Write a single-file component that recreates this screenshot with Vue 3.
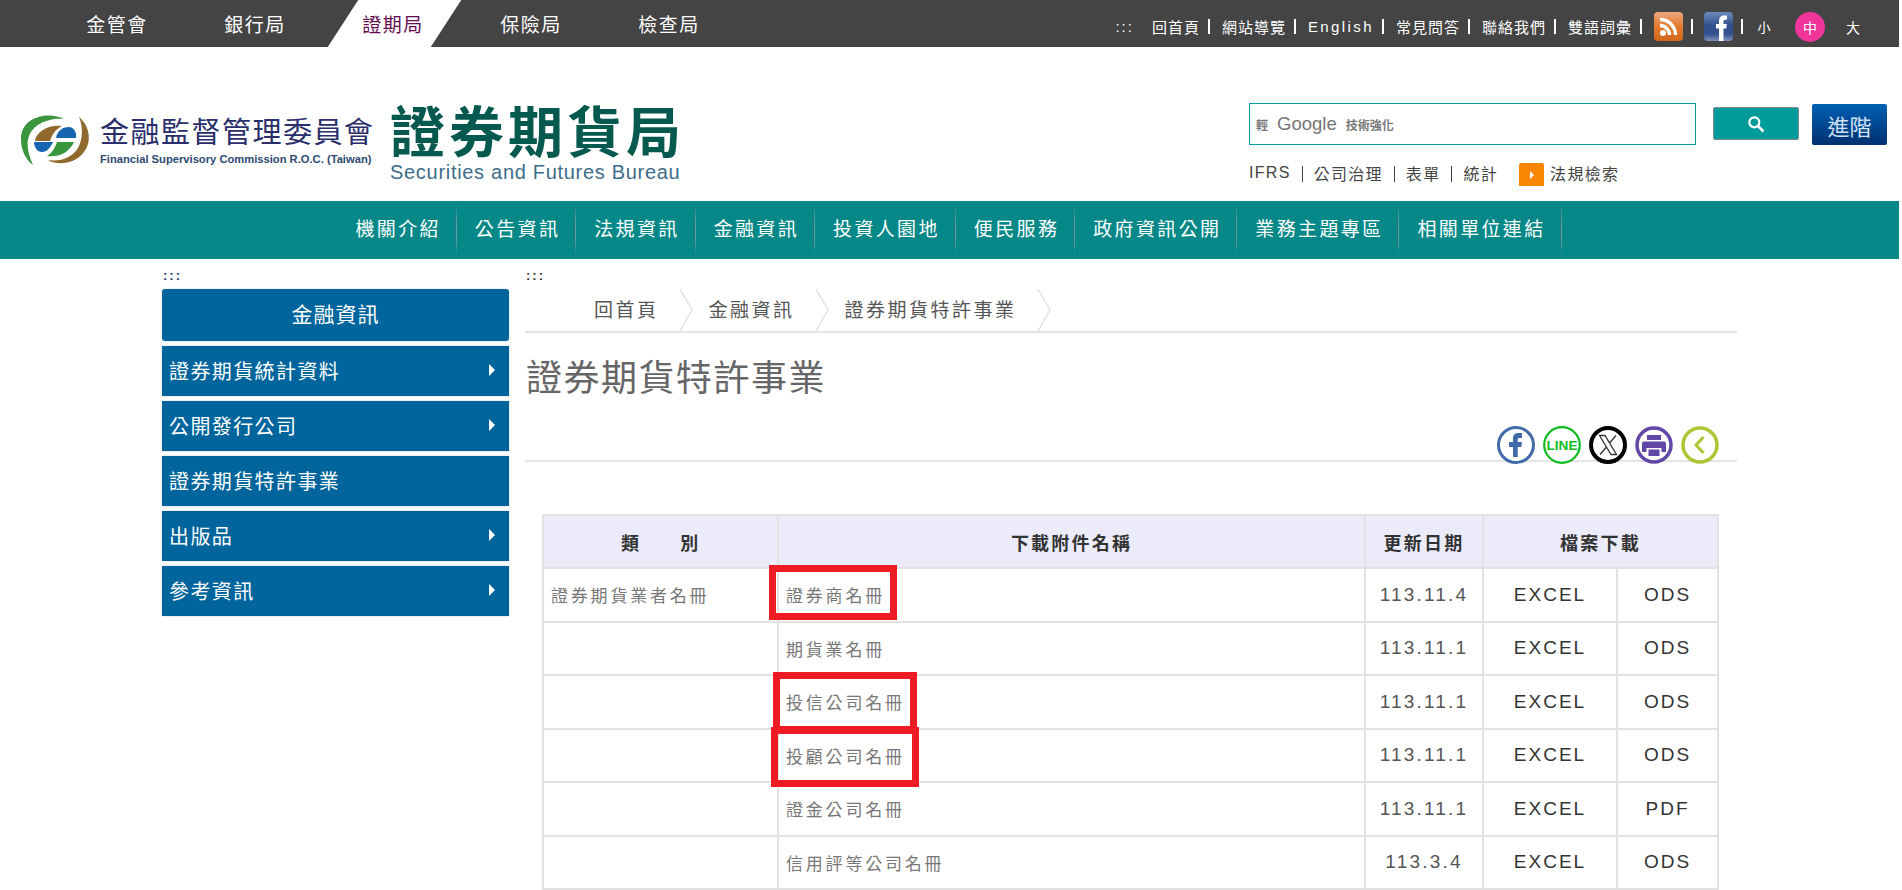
<script setup>
const tabs = ['金管會', '銀行局', '證期局', '保險局', '檢查局']
const utils = ['回首頁', '網站導覽', 'English', '常見問答', '聯絡我們', '雙語詞彙']
const subLinks = ['IFRS', '公司治理', '表單', '統計']
const navItems = ['機關介紹', '公告資訊', '法規資訊', '金融資訊', '投資人園地', '便民服務', '政府資訊公開', '業務主題專區', '相關單位連結']
const sideItems = [
  { name: '證券期貨統計資料', more: true },
  { name: '公開發行公司', more: true },
  { name: '證券期貨特許事業', more: false },
  { name: '出版品', more: true },
  { name: '參考資訊', more: true }
]
const crumbs = ['回首頁', '金融資訊', '證券期貨特許事業']
const rows = [
  { cat: '證券期貨業者名冊', name: '證券商名冊', date: '113.11.4', alt: 'ODS' },
  { cat: '', name: '期貨業名冊', date: '113.11.1', alt: 'ODS' },
  { cat: '', name: '投信公司名冊', date: '113.11.1', alt: 'ODS' },
  { cat: '', name: '投顧公司名冊', date: '113.11.1', alt: 'ODS' },
  { cat: '', name: '證金公司名冊', date: '113.11.1', alt: 'PDF' },
  { cat: '', name: '信用評等公司名冊', date: '113.3.4', alt: 'ODS' }
]
</script>

<template>
  <div class="page">
    <div class="topbar">
      <ul class="tabs">
        <li v-for="t in tabs" :key="t" class="tab" :class="{ active: t === '證期局' }"><span>{{ t }}</span></li>
      </ul>
      <div class="utils">
        <span class="dots">:::</span>
        <template v-for="u in utils" :key="u">
          <a class="util" :class="{ en: u === 'English' }">{{ u }}</a><i class="sep"></i>
        </template>
        <svg class="social" viewBox="0 0 29 29">
          <defs>
            <linearGradient id="rssg" x1="0" y1="0" x2="0" y2="1">
              <stop offset="0" stop-color="#efa77c" /><stop offset=".5" stop-color="#e27a2e" /><stop offset="1" stop-color="#d2671c" />
            </linearGradient>
          </defs>
          <rect width="29" height="29" rx="4" fill="url(#rssg)" />
          <circle cx="9" cy="21" r="3" fill="#fff" />
          <path d="M6 13.500a9.500 9.500 0 0 1 9.500 9.500M6 7.500a15.500 15.500 0 0 1 15.500 15.500" fill="none" stroke="#fff" stroke-width="3.400" />
        </svg>
        <i class="sep after-icon"></i>
        <svg class="social" viewBox="0 0 29 29">
          <defs>
            <linearGradient id="fbg" x1="0" y1="0" x2="0" y2="1">
              <stop offset="0" stop-color="#6d8abd" /><stop offset=".45" stop-color="#34518f" /><stop offset=".75" stop-color="#324f8e" /><stop offset="1" stop-color="#7f92ba" />
            </linearGradient>
          </defs>
          <rect width="29" height="29" rx="4" fill="url(#fbg)" />
          <path d="M15 29V16.500h-3v-4.500h3V9c0-3.500 2-5.500 5.500-5.500H23v4.300h-1.600c-1.400 0-1.900.7-1.900 1.900V12h3.300l-.5 4.500h-2.800V29z" fill="#fff" />
        </svg>
        <i class="sep last"></i>
        <a class="size small">小</a>
        <a class="size current">中</a>
        <a class="size big">大</a>
      </div>
    </div>

    <header class="head">
      <svg class="logo" viewBox="0 0 72 52">
        <path d="M44 5C30-3 0 2 1 26c0 10 5 20 12 25C8 40 6 30 9 22 13 10 30 3 44 5z" fill="#3a963c" />
        <path d="M59 3c11 9 13 25 5 35-9 12-26 14-36 8 12 2 24-2 30-12 5-9 5-22 1-31z" fill="#8f6a2c" />
        <path d="M15 27c1-9 13-17 27-15-6 3-10 8-12 15z" fill="#8f6a2c" />
        <path d="M36 24c1-8 8-11 13-11s8 6 7 11z" fill="#1565b0" />
        <path d="M14 28h19c-3 6-6 10-11 10s-8-5-8-10z" fill="#1565b0" />
        <path d="M37 28h17c-4 9-14 16-27 14 5-3 8-8 10-14z" fill="#3a963c" />
      </svg>
      <div class="org">
        <div class="org-cn">金融監督管理委員會</div>
        <div class="org-en">Financial Supervisory Commission R.O.C. (Taiwan)</div>
      </div>
      <div class="bureau">
        <div class="bureau-cn">證券期貨局</div>
        <div class="bureau-en">Securities and Futures Bureau</div>
      </div>
      <div class="head-right">
        <div class="search-row">
          <div class="search-box">
            <span class="g-small">輕</span><span class="g-logo">Google</span><span class="g-small">技術強化</span>
          </div>
          <button class="search-btn">
            <svg viewBox="0 0 24 24" width="20" height="20"><circle cx="10" cy="10" r="6" fill="none" stroke="#fff" stroke-width="2.600" /><path d="M14.500 14.500 21 21" stroke="#fff" stroke-width="3" /></svg>
          </button>
          <button class="adv-btn">進階</button>
        </div>
        <div class="sub-links">
          <template v-for="(s, i) in subLinks" :key="s">
            <i v-if="i" class="bar"></i><a>{{ s }}</a>
          </template>
          <span class="law-icon"><i></i></span>
          <a>法規檢索</a>
        </div>
      </div>
    </header>

    <nav class="mainnav">
      <a v-for="n in navItems" :key="n" class="nav-item">{{ n }}</a>
    </nav>

    <div class="content">
      <aside class="side">
        <div class="dots2">:::</div>
        <div class="side-title">金融資訊</div>
        <a v-for="s in sideItems" :key="s.name" class="side-item" :class="{ more: s.more }">{{ s.name }}</a>
      </aside>

      <main class="main">
        <div class="dots2">:::</div>
        <div class="crumbs">
          <a v-for="c in crumbs" :key="c" class="crumb">{{ c }}
            <svg class="chev" viewBox="0 0 14 42" preserveAspectRatio="none"><path d="M1 0 13 21 1 42" fill="none" stroke="#ddd" stroke-width="1.200" /></svg>
          </a>
        </div>
        <h1 class="title">證券期貨特許事業</h1>
        <div class="share">
          <svg viewBox="0 0 38 38"><circle cx="19" cy="19" r="17.500" fill="#fff" stroke="#416ba8" stroke-width="3" /><path d="M16 31V21h-4v-5h4v-3.500C16 8.500 18.200 7 21.500 7H25v5h-2.500c-1.300 0-1.800.6-1.800 1.700V16H25l-.7 5h-3.600v10z" fill="#416ba8" /></svg>
          <svg viewBox="0 0 38 38"><circle cx="19" cy="19" r="17.800" fill="#fff" stroke="#0fbc1f" stroke-width="2.200" /><text x="19" y="24" text-anchor="middle" textLength="31" lengthAdjust="spacingAndGlyphs" class="line-text">LINE</text></svg>
          <svg viewBox="0 0 38 38"><circle cx="19" cy="19" r="17" fill="#fff" stroke="#000" stroke-width="4" /><path d="M10.500 9.500h5.500l11.500 19H22zM27 9.500 20.500 17M17.500 21 11 28.500" fill="none" stroke="#333" stroke-width="1.300" /></svg>
          <svg viewBox="0 0 38 38"><circle cx="19" cy="19" r="17" fill="#fff" stroke="#6246a6" stroke-width="3.500" /><path d="M12 9h14v5H12zM9 15.500h20a2 2 0 0 1 2 2V26h-4.500v-4h-15v4H7v-8.500a2 2 0 0 1 2-2zM13.500 23.500h11V30h-11z" fill="#6246a6" /></svg>
          <svg viewBox="0 0 38 38"><circle cx="19" cy="19" r="17" fill="#fff" stroke="#b0c534" stroke-width="3.500" /><path d="M22.500 11 15 19l7.500 8" fill="none" stroke="#b0c534" stroke-width="3" /></svg>
        </div>

        <div class="table-wrap">
          <table class="files">
            <colgroup>
              <col class="c1" /><col class="c2" /><col class="c3" /><col class="c4" /><col class="c5" />
            </colgroup>
            <thead>
              <tr>
                <th class="cat-head">類　　別</th>
                <th>下載附件名稱</th>
                <th>更新日期</th>
                <th colspan="2">檔案下載</th>
              </tr>
            </thead>
            <tbody>
              <tr v-for="r in rows" :key="r.name">
                <td class="txt">{{ r.cat }}</td>
                <td class="txt">{{ r.name }}</td>
                <td class="date">{{ r.date }}</td>
                <td class="dl">EXCEL</td>
                <td class="dl">{{ r.alt }}</td>
              </tr>
            </tbody>
          </table>
          <!-- red marks drawn over the screenshot -->
          <i class="mark m1"></i>
          <i class="mark m2"></i>
          <i class="mark m3"></i>
        </div>
      </main>
    </div>
  </div>
</template>

<style>
html, body { margin: 0; background: #fff; overflow: hidden; }
</style>

<style scoped>
.page {
  width: 1899px; height: 890px; overflow: hidden;
  font-family: "Liberation Sans", "Noto Sans CJK TC", sans-serif;
  color: #555;
}
ul { list-style: none; margin: 0; padding: 0; }
.topbar { height: 47px; background: #444; display: flex; justify-content: space-between; color: #fff; }
.tabs { display: flex; padding-left: 48px; }
.tab { width: 138px; height: 47px; display: flex; align-items: center; justify-content: center; position: relative; font-size: 19px; letter-spacing: 1.500px; }
.tab span { position: relative; }
.tab.active { color: #660c50; }
.tab.active::before { content: ""; position: absolute; left: 19px; top: 0; width: 103px; height: 47px; background: #fff; transform: skewX(-33deg); }

.utils { display: flex; align-items: center; padding-right: 31px; font-size: 15px; letter-spacing: 1px; margin-top: 6px; height: 41px; }
.dots { margin-right: 18px; letter-spacing: 2px; }
.util { white-space: nowrap; }
.util.en { letter-spacing: 2.400px; }
.sep { width: 2px; height: 15px; background: #fff; margin: 0 12px 0 8px; }
.sep.after-icon { margin-right: 11px; }
.sep.last { margin-right: 6px; }
.social { width: 29px; height: 29px; }
.size { width: 30px; height: 30px; border-radius: 50%; display: flex; align-items: center; justify-content: center; font-size: 14px; letter-spacing: 0; }
.size.small { margin-right: 16px; font-size: 13px; }
.size.current { background: #f0359a; margin-right: 13px; }

.head { height: 154px; display: flex; align-items: flex-start; padding-left: 20px; box-sizing: border-box; }
.logo { width: 72px; height: 52px; margin-top: 67px; flex: none; }
.org { margin: 71px 0 0 8px; width: 290px; flex: none; }
.org-cn { font-size: 29px; line-height: 30px; color: #2a2f6b; letter-spacing: 1.500px; white-space: nowrap; }
.org-en { font-size: 11.200px; line-height: 13px; margin-top: 5px; font-weight: 700; color: #2d4a72; white-space: nowrap; }
.bureau { flex: none; width: 300px; margin-top: 60px; }
.bureau-cn { font-size: 55px; line-height: 52px; font-weight: 700; color: #05594f; white-space: nowrap; letter-spacing: 4px; }
.bureau-en { font-size: 20px; line-height: 16px; margin-top: 5px; color: #3d6d8a; letter-spacing: .700px; white-space: nowrap; }
.head-right { margin-left: 559px; width: 640px; padding-top: 56px; }
.search-row { display: flex; align-items: flex-start; }
.search-box { width: 447px; height: 42px; border: 1px solid #0a9c9c; box-sizing: border-box; display: flex; align-items: center; padding-left: 6px; color: #666; }
.g-small { font-size: 12px; font-weight: 700; color: #777; }
.g-logo { font-size: 18.500px; margin: 0 9px 0 9px; color: #757575; }
.search-btn { width: 86px; height: 33px; margin: 4px 13px 0 17px; background: #009c9c; border: 1px solid #888; border-radius: 2px; display: flex; align-items: center; justify-content: center; padding: 0; }
.adv-btn { width: 75px; height: 41px; margin-top: 1px; border: 0; border-radius: 2px; background: linear-gradient(180deg, #0060b4, #00306f); color: #cfe2f5; font-size: 22px; letter-spacing: 0; padding: 0; font-family: inherit; }
.sub-links { display: flex; align-items: center; height: 23px; margin-top: 18px; font-size: 16px; letter-spacing: 1.300px; color: #444; }
.sub-links a { margin-bottom: 4px; }
.bar { width: 1px; height: 16px; background: #444; margin: 0 11px 2px 11px; }
.law-icon { width: 25px; height: 23px; background: #f98600; border-radius: 2px 2px 0 0; margin: 0 6px 0 21px; display: flex; align-items: center; justify-content: center; }
.law-icon i { width: 0; height: 0; border-left: 4px solid #fff; border-top: 4px solid transparent; border-bottom: 4px solid transparent; }

.mainnav { height: 58px; background: #068888; display: flex; justify-content: center; align-items: center; }
.nav-item { padding: 0 16px 0 18px; line-height: 50px; font-size: 19px; letter-spacing: 2.350px; color: #fff; white-space: nowrap; position: relative; }
.nav-item::after {
  content: ""; position: absolute; right: 0; top: 0; bottom: 0; width: 2px;
  background: linear-gradient(90deg, #0d5b66, #6dbdbd);
  mask-image: linear-gradient(180deg, transparent, #000 30%, #000 70%, transparent);
}

.content { display: flex; padding-left: 162px; }
.side { width: 347px; flex: none; margin-right: 16px; color: #fff; }
.dots2 { height: 30px; line-height: 33px; font-size: 13px; font-weight: 700; color: #0b3a6b; letter-spacing: 2px; padding-left: 1px; box-sizing: border-box; }
.side-title { height: 52px; line-height: 52px; text-align: center; background: #00659c; border-radius: 3px; font-size: 21px; letter-spacing: 1px; margin-bottom: 5px; box-shadow: 0 0 2px #ccc; }
.side-item { display: block; height: 50px; line-height: 52px; padding-left: 7px; background: #00659c; font-size: 20px; letter-spacing: 1.400px; margin-bottom: 5px; position: relative; box-shadow: 0 0 2px #ccc; }
.side-item.more::after { content: ""; position: absolute; right: 14px; top: 18px; border-left: 6px solid #fff; border-top: 6px solid transparent; border-bottom: 6px solid transparent; }

.main { width: 1212px; flex: none; }
.main .dots2 { color: #333; }
.crumbs { height: 42px; display: flex; border-bottom: 2px solid #e4e4e4; padding-left: 69px; margin-top: -19px; padding-top: 19px; }
.crumb { position: relative; font-size: 19px; letter-spacing: 2.500px; line-height: 44px; margin-right: 50px; white-space: nowrap; color: #555; }
.chev { position: absolute; right: -34px; top: 0; width: 14px; height: 42px; }
.title { margin: 22px 0 0 0; height: 107px; font-size: 36px; line-height: 48px; font-weight: 400; letter-spacing: 1.500px; color: #666; border-bottom: 2px solid #e4e4e4; padding-left: 1px; box-sizing: border-box; position: relative; }
.share { display: flex; gap: 8px; height: 0; justify-content: flex-end; padding-right: 18px; transform: translateY(-36px); }
.share svg { width: 38px; height: 38px; flex: none; }
.line-text { font: 700 13px "Liberation Sans", sans-serif; fill: #0fbc1f; }

.table-wrap { margin: 52px 20px 0 17px; position: relative; }
.files { width: 1175px; border-collapse: collapse; table-layout: fixed; }
.c1 { width: 235px; } .c2 { width: 587px; } .c3 { width: 118px; } .c4 { width: 134px; } .c5 { width: 101px; }
th, td { border: 2px solid #e2e2e2; padding: 0; }
th { height: 51px; background: #ebebf9; font-size: 18px; letter-spacing: 2.200px; font-weight: 700; color: #333; text-align: center; }
.cat-head { letter-spacing: 1.700px; }
td { height: 51.500px; text-align: center; }
.txt { text-align: left; padding-left: 7px; font-size: 17px; letter-spacing: 2.800px; color: #777; white-space: nowrap; }
.date { font-size: 19px; letter-spacing: 2.200px; color: #555; }
.dl { font-size: 19px; letter-spacing: 2px; color: #333; }

.mark { position: absolute; border: 7px solid #ed1c24; box-sizing: border-box; display: block; }
.m1 { left: 227px; top: 51px; width: 128px; height: 55px; }
.m2 { left: 231px; top: 158px; width: 144px; height: 61px; }
.m3 { left: 229px; top: 213px; width: 148px; height: 60px; }
</style>
